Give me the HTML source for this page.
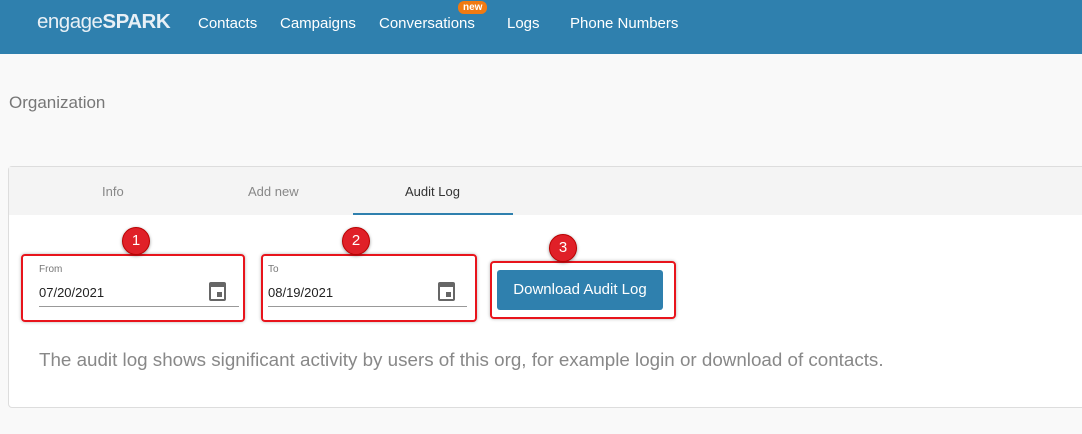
<!DOCTYPE html>
<html><head><style>
*{margin:0;padding:0;box-sizing:border-box}
body{width:1082px;height:434px;background:#f9f9f9;font-family:"Liberation Sans",sans-serif;position:relative;overflow:hidden}
.hdr{position:absolute;left:0;top:0;width:1082px;height:54px;background:#2f80ae}
.hdr span{position:absolute;top:15px;color:#fff;font-size:15px}
.logo{left:37px;top:10px!important;font-size:20.5px!important;letter-spacing:-0.5px;color:#e8f0f6!important}
.new{position:absolute;left:458px;top:1px;background:#f07a12;color:#fff;font-size:10px;font-weight:bold;border-radius:6px;padding:1px 5px}
.org{position:absolute;left:9px;top:93px;font-size:17px;color:#777}
.card{position:absolute;left:8px;top:166px;width:1090px;height:242px;background:#fff;border:1px solid #ddd;border-radius:4px}
.tabs{position:absolute;left:0;top:0;width:100%;height:48px;background:#f4f4f4}
.tabs span{position:absolute;top:17px;font-size:13px;color:#888}
.ul{position:absolute;left:344px;top:46px;width:160px;height:2px;background:#2f80ae}
.red{position:absolute;border:2px solid #e8141c;border-radius:4px;box-shadow:0 0 3px rgba(0,0,0,.3)}
.num{position:absolute;width:28px;height:28px;border-radius:50%;background:#e02028;border:1px solid #b00;color:#fff;font-size:15px;text-align:center;line-height:26px;box-shadow:0 1px 3px rgba(0,0,0,.4)}
.lbl{position:absolute;font-size:10px;color:#777}
.val{position:absolute;font-size:13px;color:#222}
.line{position:absolute;height:1px;background:#999}
.cal{position:absolute;width:17px;height:19px;border:2.5px solid #666;border-top-width:5px;border-radius:2px}
.cal:after{content:"";position:absolute;right:2px;bottom:2px;width:5px;height:5px;background:#666}
.btn{position:absolute;left:497px;top:270px;width:166px;height:40px;background:#2f80ae;border-radius:3px;color:#fff;font-size:15px;text-align:center;line-height:40px}
.desc{position:absolute;left:39px;top:349px;font-size:18.8px;color:#888}
</style></head><body>
<div class="hdr">
<span class="logo">engage<b>SPARK</b></span>
<span style="left:198px">Contacts</span>
<span style="left:280px">Campaigns</span>
<span style="left:379px">Conversations</span>
<span style="left:507px">Logs</span>
<span style="left:570px">Phone Numbers</span>
<div class="new">new</div>
</div>
<div class="org">Organization</div>
<div class="card"><div class="tabs">
<span style="left:93px">Info</span><span style="left:239px">Add new</span><span style="left:396px;color:#333">Audit Log</span>
<div class="ul"></div></div></div>
<div class="red" style="left:21px;top:254px;width:224px;height:68px"></div>
<div class="red" style="left:261px;top:254px;width:216px;height:68px"></div>
<div class="red" style="left:490px;top:261px;width:186px;height:58px"></div>
<div class="num" style="left:122px;top:227px">1</div>
<div class="num" style="left:342px;top:227px">2</div>
<div class="num" style="left:549px;top:234px">3</div>
<div class="lbl" style="left:39px;top:264px">From</div>
<div class="val" style="left:39px;top:285px">07/20/2021</div>
<div class="line" style="left:39px;top:306px;width:200px"></div>
<div class="cal" style="left:209px;top:282px"></div>
<div class="lbl" style="left:268px;top:264px">To</div>
<div class="val" style="left:268px;top:285px">08/19/2021</div>
<div class="line" style="left:268px;top:306px;width:199px"></div>
<div class="cal" style="left:438px;top:282px"></div>
<div class="btn">Download Audit Log</div>
<div class="desc">The audit log shows significant activity by users of this org, for example login or download of contacts.</div>
</body></html>
